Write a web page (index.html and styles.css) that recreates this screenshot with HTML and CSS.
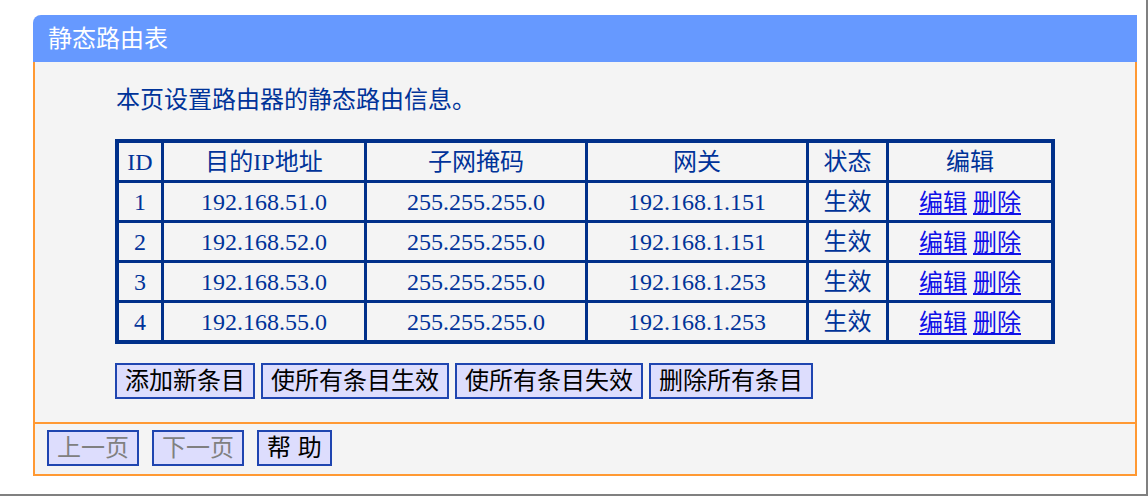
FILE: index.html
```html
<!DOCTYPE html>
<html lang="zh-CN">
<head>
    <meta charset="UTF-8">
    <title>静态路由表</title>
    <link rel="stylesheet" href="styles.css">
</head>
<body>
    <div class="frame">
        <div class="panel">
            <div class="panel-title">静态路由表</div>
            <div class="panel-body">
                <p class="intro">本页设置路由器的静态路由信息。</p>
                <table class="route-table">
                    <colgroup>
                        <col class="c-id">
                        <col class="c-dest">
                        <col class="c-mask">
                        <col class="c-gw">
                        <col class="c-state">
                        <col class="c-edit">
                    </colgroup>
                    <tr>
                        <td>ID</td>
                        <td>目的IP地址</td>
                        <td>子网掩码</td>
                        <td>网关</td>
                        <td>状态</td>
                        <td>编辑</td>
                    </tr>
                    <tr>
                        <td>1</td>
                        <td>192.168.51.0</td>
                        <td>255.255.255.0</td>
                        <td>192.168.1.151</td>
                        <td>生效</td>
                        <td><a href="#">编辑</a> <a href="#">删除</a></td>
                    </tr>
                    <tr>
                        <td>2</td>
                        <td>192.168.52.0</td>
                        <td>255.255.255.0</td>
                        <td>192.168.1.151</td>
                        <td>生效</td>
                        <td><a href="#">编辑</a> <a href="#">删除</a></td>
                    </tr>
                    <tr>
                        <td>3</td>
                        <td>192.168.53.0</td>
                        <td>255.255.255.0</td>
                        <td>192.168.1.253</td>
                        <td>生效</td>
                        <td><a href="#">编辑</a> <a href="#">删除</a></td>
                    </tr>
                    <tr>
                        <td>4</td>
                        <td>192.168.55.0</td>
                        <td>255.255.255.0</td>
                        <td>192.168.1.253</td>
                        <td>生效</td>
                        <td><a href="#">编辑</a> <a href="#">删除</a></td>
                    </tr>
                </table>
                <div class="actions">
                    <button class="btn">添加新条目</button>
                    <button class="btn">使所有条目生效</button>
                    <button class="btn">使所有条目失效</button>
                    <button class="btn">删除所有条目</button>
                </div>
            </div>
            <div class="panel-foot">
                <button class="btn" disabled>上一页</button>
                <button class="btn" disabled>下一页</button>
                <button class="btn">帮 助</button>
            </div>
        </div>
    </div>
</body>
</html>
```
FILE: styles.css
```css
* {
    margin: 0;
    padding: 0;
    box-sizing: border-box;
}
body {
    background: #ffffff;
    font-family: "Liberation Sans", "Noto Sans CJK SC", sans-serif;
}
.frame {
    width: 1148px;
    height: 496px;
    padding: 15px 0 0 33px;
    border-right: 2px solid #808080;
    border-bottom: 2px solid #808080;
}
.panel {
    width: 1104px;
}
.panel-title {
    height: 47px;
    line-height: 47px;
    padding-left: 15px;
    background: #6699ff;
    color: #ffffff;
    font-size: 24px;
    border-top-left-radius: 8px;
}
.panel-body {
    background: #f4f4f4;
    border: 2px solid #ff9933;
    border-top: none;
    padding: 21px 0 23px 80px;
}
.intro {
    font-size: 24px;
    line-height: 34px;
    color: #003399;
    padding-left: 1px;
}
/* route table */
.route-table {
    margin-top: 22px;
    width: 940px;
    table-layout: fixed;
    border-collapse: separate;
    border-spacing: 3px;
    border: 1px solid #00308a;
    background: #00308a;
    font-family: "Liberation Serif", "Noto Sans CJK SC", serif;
    font-size: 24px;
    color: #003399;
}
.route-table td {
    height: 37px;
    padding: 0;
    line-height: 30px;
    background: #f4f4f4;
    text-align: center;
    white-space: nowrap;
}
.route-table a {
    color: #1010e8;
    font-family: "Noto Sans CJK SC", sans-serif;
}
.c-id { width: 42px; }
.c-dest { width: 200px; }
.c-mask { width: 218px; }
.c-gw { width: 218px; }
.c-state { width: 77px; }
.c-edit { width: 162px; }

.actions {
    display: flex;
    gap: 6px;
    margin-top: 19px;
}
.btn {
    height: 36px;
    padding: 0 8px;
    line-height: 32px;
    background: #ddddfd;
    border: 2px solid #1f45b0;
    border-radius: 0;
    font-family: "Liberation Sans", "Noto Sans CJK SC", sans-serif;
    font-size: 24px;
    color: #000000;
}
.btn:disabled {
    color: #808080;
}
.panel-foot {
    display: flex;
    gap: 13px;
    height: 52px;
    padding: 6px 0 0 12px;
    background: #f4f4f4;
    border: 2px solid #ff9933;
    border-top: none;
}
```
